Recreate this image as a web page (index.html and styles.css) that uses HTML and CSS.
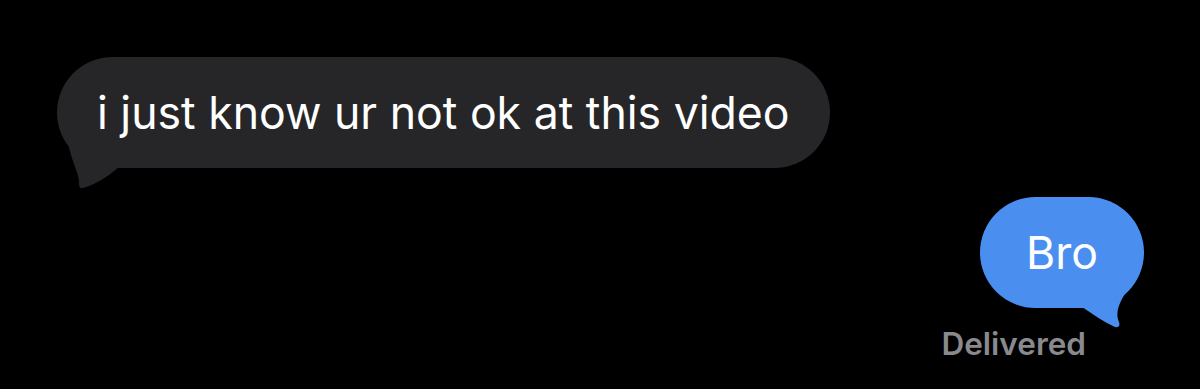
FILE: index.html
```html
<!DOCTYPE html>
<html>
<head>
<meta charset="UTF-8">
<title>Mensagens</title>
<link rel="stylesheet" href="styles.css">
</head>
<body>
<div class="chat">
	<div class="row received">
		<div class="bubble grey">
			i just know ur not ok at this video
			<svg class="tail" width="100" height="140" viewBox="0 0 100 140">
				<path d="M 10 80 C 14 106, 23 116, 22 127 Q 22 132 26 131 C 37 128, 50 121, 64 108 L 64 80 Z" fill="#262629"/>
			</svg>
		</div>
	</div>
	<div class="row sent">
		<div class="bubble blue">
			Bro
			<svg class="tail" width="170" height="140" viewBox="0 0 170 140">
				<path d="M 152 86 C 142 101, 134 113, 139 125 Q 141 131 135 130 C 124 125, 114 118, 102 110 L 119 80 Z" fill="#4a8ff0"/>
			</svg>
		</div>
	</div>
	<p class="status">Delivered</p>
</div>
</body>
</html>
```
FILE: styles.css
```css
body {
	margin: 0;
	background-color: #000000;
	font-family: Inter, "Noto Sans", sans-serif;
}

.chat {
	display: flex;
	flex-direction: column;
	padding-top: 57px;
}

.row {
	display: flex;
}

.received {
	padding-left: 57px;
}

.sent {
	justify-content: flex-end;
	padding-right: 56px;
	margin-top: 29px;
}

.bubble {
	position: relative;
	display: flex;
	align-items: center;
	height: 111px;
	border-radius: 56px;
	color: white;
	font-size: 44.6px;
	white-space: nowrap;
	z-index: 0;
}

.grey {
	background: #262629;
	padding: 0 40px;
}

.blue {
	background: #4a8ff0;
	padding: 0 46px;
}

.tail {
	position: absolute;
	left: 0;
	top: 0;
	overflow: visible;
	z-index: -1;
}

.status {
	margin: 16px 114px 0 0;
	text-align: right;
	color: #8a8a8e;
	font-size: 31.5px;
	font-weight: 600;
}
```
